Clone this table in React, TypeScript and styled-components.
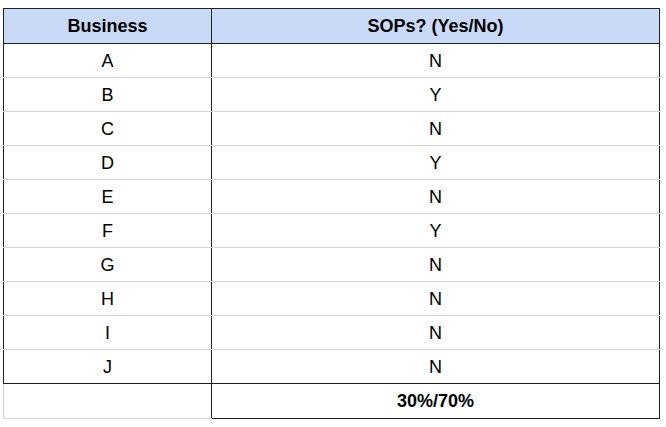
import React from "react";
import styled, { createGlobalStyle } from "styled-components";

const Global = createGlobalStyle`
  html, body { margin: 0; padding: 0; background: #ffffff; }
  body { font-family: "Liberation Sans", Arial, sans-serif; color: #000; }
`;

const Page = styled.div`
  padding: 8px 0 0 3px;
`;

const Table = styled.table`
  border-collapse: collapse;
  table-layout: fixed;
  width: 656px;
  font-family: "Liberation Sans", Arial, sans-serif;
  font-size: 18px;
  color: #000;
`;

const HeadCell = styled.th`
  background: #c9daf8;
  border: 1px solid #1f1f1f;
  height: 34px;
  padding: 0;
  font-weight: bold;
  text-align: center;
  vertical-align: middle;
`;

const Cell = styled.td`
  height: 32px;
  padding: 1px 0 0;
  text-align: center;
  vertical-align: middle;
  border-left: 1px solid #1f1f1f;
  border-right: 1px solid #1f1f1f;
  border-top: 1px solid #d4d4d4;
  border-bottom: 1px solid #d4d4d4;
`;

const LastBodyRow = styled.tr`
  td { border-bottom: 1px solid #1f1f1f; }
`;

const SummaryBlank = styled.td`
  height: 34px;
  padding: 0;
  border-left: 1px solid #d4d4d4;
  border-bottom: 1px solid #d4d4d4;
  border-top: 1px solid #1f1f1f;
`;

const SummaryCell = styled.td`
  height: 34px;
  padding: 0;
  text-align: center;
  vertical-align: middle;
  font-weight: bold;
  border: 1px solid #1f1f1f;
`;

const rows: [string, string][] = [
  ["A", "N"],
  ["B", "Y"],
  ["C", "N"],
  ["D", "Y"],
  ["E", "N"],
  ["F", "Y"],
  ["G", "N"],
  ["H", "N"],
  ["I", "N"],
  ["J", "N"],
];

export default function App() {
  return (
    <>
      <Global />
      <Page>
        <Table>
          <colgroup>
            <col style={{ width: 208 }} />
            <col style={{ width: 448 }} />
          </colgroup>
          <thead>
            <tr>
              <HeadCell>Business</HeadCell>
              <HeadCell>SOPs? (Yes/No)</HeadCell>
            </tr>
          </thead>
          <tbody>
            {rows.map(([b, s], i) =>
              i === rows.length - 1 ? (
                <LastBodyRow key={b}>
                  <Cell>{b}</Cell>
                  <Cell>{s}</Cell>
                </LastBodyRow>
              ) : (
                <tr key={b}>
                  <Cell>{b}</Cell>
                  <Cell>{s}</Cell>
                </tr>
              )
            )}
            <tr>
              <SummaryBlank />
              <SummaryCell>30%/70%</SummaryCell>
            </tr>
          </tbody>
        </Table>
      </Page>
    </>
  );
}
